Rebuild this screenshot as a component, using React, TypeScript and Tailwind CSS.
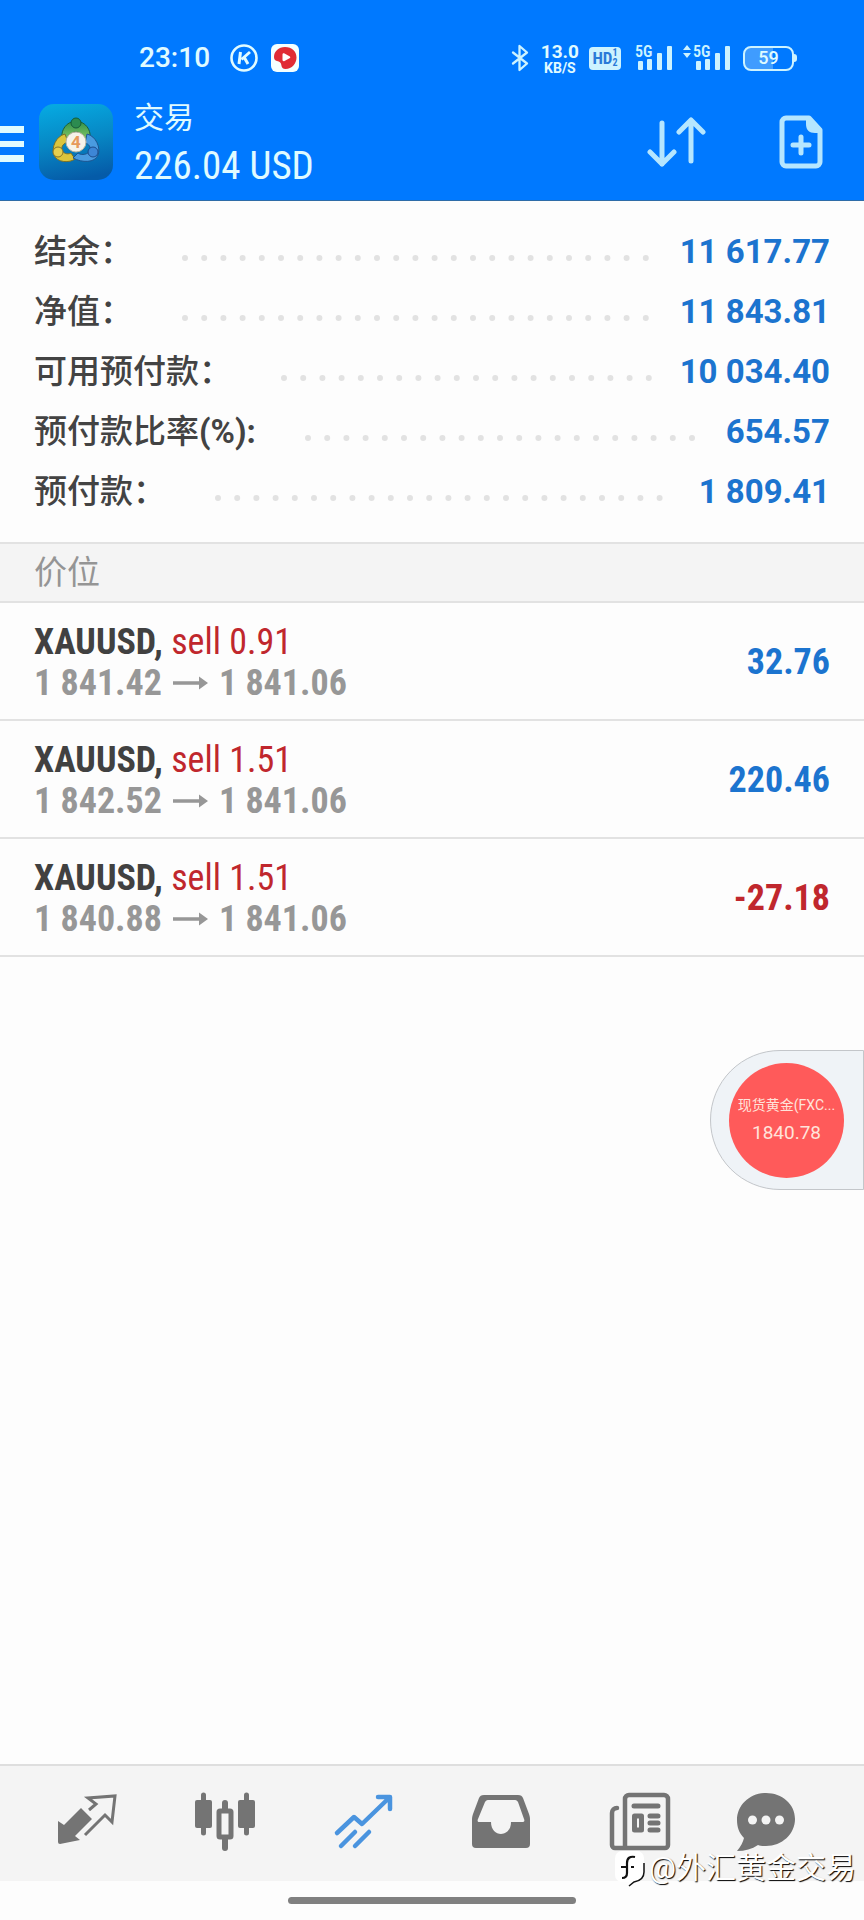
import { useState } from "react"
import type { ReactNode } from "react"
import clsx from "clsx"

const sans = "font-['Roboto','Noto_Sans_CJK_SC',sans-serif]"
const narrow = "font-['Roboto_Condensed','Liberation_Sans_Narrow','Noto_Sans_CJK_SC',sans-serif]"

const account = [
  { label: "结余：", value: "11 617.77" },
  { label: "净值：", value: "11 843.81" },
  { label: "可用预付款：", value: "10 034.40" },
  { label: "预付款比率", unit: "(%):", value: "654.57" },
  { label: "预付款：", value: "1 809.41" },
]

const positions = [
  { symbol: "XAUUSD,", side: "sell 0.91", open: "1 841.42", current: "1 841.06", profit: "32.76" },
  { symbol: "XAUUSD,", side: "sell 1.51", open: "1 842.52", current: "1 841.06", profit: "220.46" },
  { symbol: "XAUUSD,", side: "sell 1.51", open: "1 840.88", current: "1 841.06", profit: "-27.18" },
]

function Signal({ arrows = false }: { arrows?: boolean }) {
  return (
    <svg width={arrows ? 48 : 38} height="36" viewBox={arrows ? "-10 -4 48 36" : "0 -4 38 36"} fill="#cdf3ff">
      {arrows && <path d="M-6 1l4 5h-8zM-6 14l-4-5h8z" />}
      <text x="0" y="13" fontSize="16" fontWeight="600" className={narrow}>5G</text>
      <rect x="3" y="17" width="5" height="9" rx="1" />
      <rect x="12" y="15" width="5" height="11" rx="1" />
      <rect x="22" y="9" width="5" height="17" rx="1" />
      <rect x="32" y="2" width="5" height="24" rx="1" />
    </svg>
  )
}

function StatusBar() {
  return (
    <div className="flex h-11 items-center justify-between pl-[139px] pr-[67px] text-[#e0fbff]">
      <div className="flex items-center">
        <span className="text-[28px] font-medium leading-none">23:10</span>
        <svg className="ml-5" width="28" height="28" viewBox="0 0 28 28" fill="none" stroke="currentColor">
          <circle cx="14" cy="14" r="12.5" strokeWidth="2.6" />
          <path d="M10.5 8L9 20M20 8l-8.500 7.500M14 13l4 7" strokeWidth="3" />
        </svg>
        <svg className="ml-3" width="30" height="28" viewBox="0 0 30 28">
          <rect x="1" width="28" height="28" rx="6" fill="#f4ffff" />
          <path d="M15 3c7 0 11.500 4.500 11.500 10.500S22 25 15.500 25c-2.500 0-4-1.500-4.300-4.500-.2-2-1.700-3-4.200-3.500-2-.5-3-1.700-3-4C4 7.500 8.500 3 15 3z" fill="#e02c35" />
          <path d="M12.500 10.500c0-1 1-1.500 2-1l5 2.700c1 .6 1 1.600 0 2.100l-5 2.800c-1 .5-2 0-2-1z" fill="#fff" />
        </svg>
      </div>
      <div className="flex items-center">
        <svg width="18" height="28" viewBox="0 0 18 28" fill="none" stroke="#cdf3ff" strokeWidth="2.300" strokeLinejoin="round" strokeLinecap="round">
          <path d="M2 8.500l14 11-7.500 6.500V2L16 8.500l-14 11" />
        </svg>
        <div className="ml-3 flex flex-col items-center font-bold">
          <span className="text-[19px] leading-[19px]">13.0</span>
          <span className="text-[14px] leading-[14px]">KB/S</span>
        </div>
        <div className={clsx("ml-[10px] flex h-[23px] w-8 items-center justify-center rounded bg-[#cdf3ff] text-[#2a7ad8]", narrow)}>
          <span className="text-[17px] font-bold leading-none">HD</span>
          <span className="flex flex-col text-[10px] font-bold leading-[10px]">
            <span>1</span>
            <span>2</span>
          </span>
        </div>
        <div className="ml-[14px] flex gap-[10px]">
          <Signal />
          <Signal arrows />
        </div>
        <div className="ml-3 flex items-center">
          <div className="flex h-[25px] w-[51px] items-center justify-center rounded-lg border-2 border-[#cdf3ff] bg-[linear-gradient(90deg,#3f9cff_59%,transparent_59%)] text-[18px] font-medium leading-none">
            59
          </div>
          <div className="h-2 w-[3px] rounded-r bg-[#cdf3ff]" />
        </div>
      </div>
    </div>
  )
}

function AppLogo() {
  return (
    <svg width="76" height="78" viewBox="0 0 76 78">
      <defs>
        <linearGradient id="tile" x1="0.300" y1="0" x2="0.500" y2="1">
          <stop offset="0" stopColor="#06a8e0" />
          <stop offset="0.500" stopColor="#0787c4" />
          <stop offset="1" stopColor="#055ba8" />
        </linearGradient>
        <linearGradient id="green" x1="0" y1="0" x2="0" y2="1">
          <stop offset="0" stopColor="#2f8f4a" />
          <stop offset="1" stopColor="#8fd06a" />
        </linearGradient>
      </defs>
      <rect x="1" y="1" width="74" height="76" rx="15" fill="url(#tile)" />
      <path d="M26 39c-5-6-1-20 12-21 13 1 17 15 12 21l-6-2c1-4-1-8-6-8s-7 4-6 8z" fill="url(#green)" stroke="#1d5f38" />
      <path d="M27 31c-9 2-14 14-11 21 3 8 16 8 21 4l-4-6c-4 2-8 0-9-3-1-4 2-7 6-8z" fill="#dcc53c" stroke="#77702a" />
      <path d="M49 31c9 2 14 14 11 21-3 8-16 8-25 3l5-5c4 3 10 1 12-2 1-4-1-7-5-8z" fill="#4a9be0" stroke="#1c5590" />
      <circle cx="38" cy="20" r="5" fill="#2c8b50" stroke="#155c38" />
      <circle cx="20" cy="49" r="5" fill="#e6cf4e" stroke="#857428" />
      <circle cx="55" cy="49" r="5" fill="#3d86d6" stroke="#1c4c8c" />
      <circle cx="38" cy="39" r="10" fill="#f6f3ea" stroke="#b8b4a0" />
      <text x="38" y="45" textAnchor="middle" fontSize="17" fontWeight="700" fill="#e69a5c" className={sans}>4</text>
    </svg>
  )
}

function Header() {
  return (
    <header className="border-b border-[#2e6ca8] bg-[#0079ff] pt-9">
      <StatusBar />
      <div className="mt-1 flex h-[116px] items-center text-[#e0fbff]">
        <button aria-label="菜单" className="mt-1 flex w-6 flex-col gap-2">
          <span className="h-[7px] bg-current" />
          <span className="h-[6px] bg-current" />
          <span className="h-[7px] bg-current" />
        </button>
        <div className="ml-[14px]">
          <AppLogo />
        </div>
        <div className="ml-5 flex-1">
          <h1 className="text-[30px] leading-[48px]">交易</h1>
          <p className={clsx("text-[39px] leading-[48px]", narrow)}>226.04 USD</p>
        </div>
        <button aria-label="排序" className="mr-[73px]">
          <svg width="60" height="52" viewBox="0 0 60 52" fill="none" stroke="#b5e6ff" strokeWidth="5" strokeLinecap="round" strokeLinejoin="round">
            <path d="M16 7v41M4 36l12 12 12-12M45 45V4M33 16L45 4l12 12" />
          </svg>
        </button>
        <button aria-label="新订单" className="mr-[41px]">
          <svg width="44" height="54" viewBox="0 0 44 54" fill="none" stroke="#b5e6ff" strokeWidth="5">
            <path d="M7 3h23l11 12v32a4 4 0 0 1-4 4H7a4 4 0 0 1-4-4V7a4 4 0 0 1 4-4z" strokeLinejoin="round" />
            <path d="M27 3h4l10 11v4h-5c-6 0-9-3-9-9z" fill="#b5e6ff" stroke="none" />
            <path d="M22 22v16M14 30h16" strokeLinecap="round" />
          </svg>
        </button>
      </div>
    </header>
  )
}

function Summary() {
  return (
    <dl className="px-[34px] pb-5 pt-[21px]">
      {account.map((row) => (
        <div key={row.label} className="flex h-[60px] items-center text-[33px] leading-[60px]">
          <dt className="font-medium text-[#434343]">
            {row.label}
            {row.unit && <span className="font-bold">{row.unit}</span>}
          </dt>
          <svg className="ml-[42px] mr-6 mt-3 h-[6px] min-w-0 flex-1">
            <line x1="10" y1="3" x2="100%" y2="3" stroke="#e2e2e2" strokeWidth="6" strokeLinecap="round" strokeDasharray="0 19.200" />
          </svg>
          <dd className="font-bold text-[#1c74cf]">{row.value}</dd>
        </div>
      ))}
    </dl>
  )
}

function Positions() {
  return (
    <section>
      <h2 className="border-y-2 border-[#e2e2e2] bg-[#f4f4f4] px-[34px] text-[33px] leading-[57px] text-[#959595]">
        价位
      </h2>
      <ul className={narrow}>
        {positions.map((p) => (
          <li key={p.open} className="flex h-[118px] items-center justify-between border-b-2 border-[#e2e2e2] px-[34px] pt-[3px] text-[36px] leading-[41px]">
            <div>
              <p className="text-[#c0272d]">
                <span className="font-bold text-[#414141]">{p.symbol}</span> {p.side}
              </p>
              <p className="flex items-center font-bold text-[#979797]">
                {p.open}
                <svg className="mx-[11px]" width="35" height="14" viewBox="0 0 35 14" fill="currentColor">
                  <path d="M0 5.300h26V.5l9 6.500-9 6.500V8.700H0z" />
                </svg>
                {p.current}
              </p>
            </div>
            <span className={clsx("font-bold", p.profit.startsWith("-") ? "text-[#c0272d]" : "text-[#1c74cf]")}>
              {p.profit}
            </span>
          </li>
        ))}
      </ul>
    </section>
  )
}

function QuoteBubble() {
  return (
    <button className="absolute right-0 top-[1050px] flex h-[140px] w-[154px] items-center rounded-l-full border border-[#c3c6ca] bg-[#eff3f7] pl-[18px]">
      <span className="flex size-[115px] flex-col items-center justify-center rounded-full bg-[#ff5a5a] text-[#ffe3da]">
        <span className="text-[14px] leading-[26px]">现货黄金(FXC...</span>
        <span className="text-[19px] leading-[30px]">1840.78</span>
      </span>
    </button>
  )
}

const tabs: { id: string; label: string; icon: ReactNode }[] = [
  {
    id: "quotes",
    label: "行情",
    icon: (
      <>
        <path d="M0 27l6 4 17-17 11 11-17 17 5 4-20 4a2 2 0 0 1-2-2z" fill="currentColor" />
        <path d="M31 16l7-6-8-6 27-2-3 26-7-7-20 20" fill="none" stroke="currentColor" strokeWidth="3" />
      </>
    ),
  },
  {
    id: "chart",
    label: "图表",
    icon: (
      <>
        <path d="M7.500 1v38M50.500 1v38" stroke="currentColor" strokeWidth="5" strokeLinecap="round" />
        <rect x="-1" y="6" width="17" height="28" rx="2" fill="currentColor" />
        <rect x="42" y="6" width="17" height="28" rx="2" fill="currentColor" />
        <path d="M29 9v45" stroke="currentColor" strokeWidth="6" strokeLinecap="round" />
        <rect x="23" y="17" width="12" height="26" rx="1" fill="#f4f4f4" stroke="currentColor" strokeWidth="5" />
      </>
    ),
  },
  {
    id: "trade",
    label: "交易",
    icon: (
      <path
        d="M3 39l17-16 8 7L55 4M44 3h12v12M7 52l14-14M21 52l14-14"
        fill="none"
        stroke="currentColor"
        strokeWidth="4.500"
        strokeLinecap="round"
        strokeLinejoin="round"
      />
    ),
  },
  {
    id: "history",
    label: "历史",
    icon: (
      <path
        fill="currentColor"
        fillRule="evenodd"
        d="M12 1h34c3 0 4 1 5 3l6 16c1 3 1 4 1 6v24a4 4 0 0 1-4 4H4a4 4 0 0 1-4-4V26c0-2 0-3 1-6L7 4c1-2 2-3 5-3zm4 5c-2 0-2 1-3 2L6 25c-1 2 0 3 1 3h12c0 8 5 12 10 12s10-4 10-12h11c2 0 3-1 2-3L46 8c-1-1-1-2-3-2z"
      />
    ),
  },
  {
    id: "news",
    label: "新闻",
    icon: (
      <>
        <path d="M15 54V5a4 4 0 0 1 4-4h35a4 4 0 0 1 4 4v46a3 3 0 0 1-3 3H5a3 3 0 0 1-3-3V19a5 5 0 0 1 5-5" fill="none" stroke="currentColor" strokeWidth="4.500" strokeLinecap="round" />
        <path d="M24 12h24M40 22h8M40 29h8M40 36h8" stroke="currentColor" strokeWidth="5" strokeLinecap="round" />
        <rect x="24.500" y="22" width="7" height="14" fill="none" stroke="currentColor" strokeWidth="5" strokeLinejoin="round" />
      </>
    ),
  },
  {
    id: "chat",
    label: "消息",
    icon: (
      <>
        <path d="M29-1c16 0 29 11 29 26S45 52 29 52c-3 0-6 0-8-1C15 55 8 57 0 57c4-5 6-9 7-13C2 39 0 33 0 26 0 11 13-1 29-1z" fill="currentColor" />
        <circle cx="15.500" cy="26" r="4.500" fill="#f4f4f4" />
        <circle cx="29" cy="26" r="4.500" fill="#f4f4f4" />
        <circle cx="42.500" cy="26" r="4.500" fill="#f4f4f4" />
      </>
    ),
  },
]

function Watermark() {
  return (
    <div className="pointer-events-none absolute bottom-[30px] right-2 flex items-center text-white">
      <svg className="mr-1" width="32" height="38" viewBox="0 0 32 38">
        <path d="M9 2h15a7 7 0 0 1 7 7v14c0 7-4 9-10 10l-4 4-1-4H9a7 7 0 0 1-7-7V9a7 7 0 0 1 7-7z" fill="#fff" />
        <path d="M31 14v9c0 6-4 9-10 10l-5 4" fill="none" stroke="#111" strokeWidth="1.500" />
        <path d="M22 8c-5-1-8 1-8 6v10c0 3-2 5-5 5M8 18h6M18 18h3" fill="none" stroke="#111" strokeWidth="2.200" />
      </svg>
      <span className="text-[30px] leading-[44px] [text-shadow:1px_1px_1px_#000]">@外汇黄金交易</span>
    </div>
  )
}

export default function App() {
  const [active, setActive] = useState("trade")

  return (
    <div className={clsx("relative flex min-h-screen flex-col bg-[#fdfdfd]", sans)}>
      <Header />
      <main className="flex-1">
        <Summary />
        <Positions />
      </main>
      <QuoteBubble />

      <nav className="grid h-[117px] grid-cols-[6fr_6fr_6fr_6fr_6fr_5fr] justify-items-center border-t-2 border-[#dedede] bg-[#f4f4f4] pl-[18px] pr-[41px] pt-7">
        {tabs.map((tab) => (
          <button
            key={tab.id}
            aria-label={tab.label}
            onClick={() => setActive(tab.id)}
            className={clsx("h-14", active === tab.id ? "text-[#4a94df]" : "text-[#747474]")}
          >
            <svg width="58" height="56" viewBox="0 0 58 56" className="overflow-visible">
              {tab.icon}
            </svg>
          </button>
        ))}
      </nav>
      <div className="flex h-[39px] items-center justify-center">
        <div className="h-[7px] w-1/3 rounded-full bg-[#808080]" />
      </div>
      <Watermark />
    </div>
  )
}
